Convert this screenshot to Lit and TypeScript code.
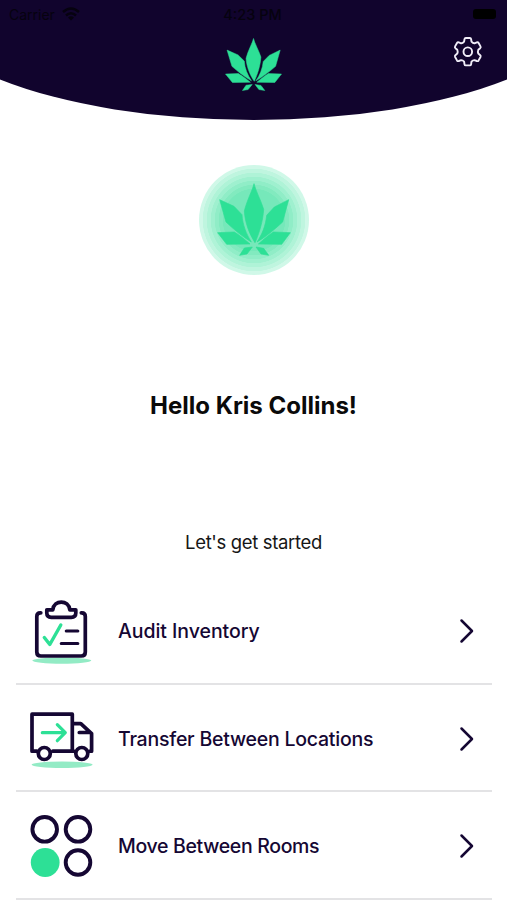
import { LitElement, html, svg, css } from "lit";
import { customElement } from "lit/decorators.js";

const leaf = html`<svg class="leaf" viewBox="81 85 222 219" preserveAspectRatio="none">
  <g fill="#2de096" stroke="#2de096" stroke-width="2" stroke-linejoin="round">
    <path d="M192 87 C197 108 212 135 221 164 C219 198 208 236 195 264 C178 238 165 204 163 169 C171 136 187 108 192 87Z"/>
    <path d="M89 135 L132 155 L156 180 C158 211 169 238 184 262 C157 246 130 223 108 202Z"/>
    <path d="M296 135 L253 157 L230 182 C227 213 216 240 201 262 C229 246 256 222 278 202Z"/>
    <path d="M83 234 L133 232 C150 242 166 256 180 268 L110 269Z"/>
    <path d="M301 234 L250 232 C234 242 219 256 205 268 L275 269Z"/>
    <path d="M187 277 L163 280 L149 302 L171 298Z"/>
    <path d="M198 277 L221 281 L236 302 L213 298Z"/>
  </g>
</svg>`;

const clipboard = svg`<g transform="translate(1.300 -4)">
  <ellipse cx="32.500" cy="70.600" rx="29.500" ry="3.100" fill="#93ebc5"/>
  <g fill="none" stroke="#150733" stroke-width="3.700" stroke-linecap="round" stroke-linejoin="round">
    <path d="M11.500 22.800H11Q7.500 22.800 7.500 26.500V62Q7.500 66 11.500 66H52Q56 66 56 62V26.500Q56 22.800 52.500 22.800H52"/>
    <path d="M17.500 19.800H23.500C24.500 9.500 39.500 9.500 40.500 19.800H46.500V23Q46.500 27.300 42 27.300H22Q17.500 27.300 17.500 23Z"/>
    <path d="M37 41H48.500M32 53.500H48.500" stroke-width="3.200"/>
  </g>
  <path d="M15 47.500L20.500 54.500L31.500 35" fill="none" stroke="#2de096" stroke-width="3.400" stroke-linecap="round" stroke-linejoin="round"/></g>`;

const truck = svg`<g transform="translate(.8 -2.300)">
  <ellipse cx="33.300" cy="65" rx="30.500" ry="3.200" fill="#93ebc5"/>
  <g fill="none" stroke="#150733" stroke-width="3.700" stroke-linejoin="round" stroke-linecap="round">
    <path d="M8 51.500H3.200V14.500H43.500V51.500M24 51.500H45M43.500 24H52L62.800 34V51.500H61M50.500 32.800H61"/>
    <circle cx="15.500" cy="53.800" r="6"/>
    <circle cx="53" cy="53.800" r="6"/>
  </g>
  <path d="M13.500 33H36M28.500 25L36.500 33L28.500 41" fill="none" stroke="#2de096" stroke-width="3.200" stroke-linecap="round" stroke-linejoin="round"/></g>`;

const rooms = svg`<g transform="translate(.5 0)">
  <g fill="none" stroke="#150733" stroke-width="3.900">
    <circle cx="16.200" cy="20.300" r="12.300"/>
    <circle cx="49.500" cy="20.300" r="12.300"/>
    <circle cx="49.500" cy="53.500" r="12.300"/>
  </g>
  <circle cx="16.700" cy="53.500" r="14.400" fill="#2de096"/></g>`;

const items = [
  { label: "Audit Inventory", cls: "audit", icon: clipboard },
  { label: "Transfer Between Locations", cls: "transfer", icon: truck },
  { label: "Move Between Rooms", cls: "move", icon: rooms },
];

@customElement("app-root")
export class AppRoot extends LitElement {
  static styles = css`
    :host { display: block; width: 507px; height: 900px; overflow: hidden; background: #fff;
      font-family: Inter, "Liberation Sans", sans-serif; color: #150733; }
    header { position: relative; height: 120px; display: flex; flex-direction: column; align-items: center; }
    .curve { position: absolute; inset: 0; width: 507px; height: 120px; }
    .status { position: relative; width: 100%; height: 28px; display: grid; grid-template-columns: 1fr auto 1fr;
      align-items: center; box-sizing: border-box; padding: 0 11px 0 9px; font-size: 14px; color: #06020f; }
    .carrier { display: flex; align-items: center; gap: 7px; }
    .wifi { width: 18px; height: 14px; }
    .time { font-weight: 500; font-size: 14.500px; }
    .battery { justify-self: end; width: 23px; height: 10px; border-radius: 3px; background: #000; }
    .leaf { display: block; }
    .logo { position: relative; margin-top: 10px; }
    .logo .leaf { width: 57px; height: 53px; }
    .gear { position: absolute; left: 452px; top: 36px; width: 31px; height: 31px; }
    .avatar { width: 110px; height: 110px; margin: 45px auto 0; border-radius: 50%; display: flex;
      justify-content: center; box-sizing: border-box; padding-top: 18px;
      background: radial-gradient(circle, #76e8ba 0 31px, #82eabf 31.500px 35px, #90edc7 35.500px 39px,
        #9ff0cf 39.500px 43px, #aff3d7 43.500px 47px, #bff5df 47.500px 51px, #d0f8e8 51.500px); }
    .avatar .leaf { width: 74px; height: 73px; }
    h1 { margin: 111px 0 0; height: 40px; line-height: 40px; text-align: center; font-size: 24px; font-weight: 700; color: #0a0a0a; }
    .intro { margin: 101px 0 0; height: 30px; line-height: 30px; text-align: center; font-size: 18.500px;
      letter-spacing: -.35px; color: #161616; }
    .list { margin: 20px 15px 0 16px; padding: 0; list-style: none; }
    .row { display: flex; align-items: center; height: 107.500px; box-sizing: border-box; padding-top: 3px; border-bottom: 2px solid #e3e3e5; }
    .icon { width: 66px; height: 74px; margin-left: 12px; flex: none; }
    .label { flex: 1; margin-left: 24px; font-size: 19.500px; font-weight: 500; white-space: nowrap; }
    .audit { letter-spacing: -.05px; }
    .transfer { letter-spacing: -.23px; }
    .move { letter-spacing: -.34px; }
    .chevron { width: 16px; height: 26px; margin-right: 17px; }
  `;

  render() {
    return html`
      <header>
        <svg class="curve" viewBox="0 0 507 120"><path d="M0 0H507V79.500A340 121.400 0 0 1 0 79.500Z" fill="#11042d"/></svg>
        <div class="status">
          <span class="carrier"><span>Carrier</span>
            <svg class="wifi" viewBox="0 0 18 14"><g fill="none" stroke="#06020f" stroke-width="2.500"><path d="M1 5Q9 -2 17 5M4 8.500Q9 4 14 8.500"/></g><path d="M6 10.500Q9 8 12 10.500L9 13.500Z" fill="#06020f"/></svg>
          </span>
          <span class="time">4:23 PM</span>
          <span class="battery"></span>
        </div>
        <div class="logo">${leaf}</div>
        <svg class="gear" viewBox="0 0 31 31" fill="none" stroke="#f1eef8" stroke-width="1.900" stroke-linejoin="round">
          <path d="M13.800 2H17.800Q18.900 2 19.100 3.100L19.500 5.700Q20.900 7.400 22.500 7.300L24.800 6.400Q26 6 26.600 7L28.500 10.400Q29 11.400 28.200 12.200L26.300 13.800Q25.500 15.700 26.300 17.600L28.200 19.200Q29 20 28.500 21L26.600 24.400Q26 25.400 24.800 25L22.500 24.100Q20.900 24 19.500 25.700L19.100 28.300Q18.900 29.400 17.800 29.400H13.800Q12.700 29.400 12.500 28.300L12.100 25.700Q10.700 24 9.100 24.100L6.800 25Q5.600 25.400 5 24.400L3.100 21Q2.600 20 3.400 19.200L5.300 17.600Q6.100 15.700 5.300 13.800L3.400 12.200Q2.600 11.400 3.100 10.400L5 7Q5.600 6 6.800 6.400L9.100 7.300Q10.700 7.400 12.100 5.700L12.500 3.100Q12.700 2 13.800 2Z"/>
          <circle cx="15.800" cy="15.700" r="4.300"/>
        </svg>
      </header>
      <div class="avatar">${leaf}</div>
      <h1><span class="hello">Hello Kris Collins!</span></h1>
      <p class="intro">Let's get started</p>
      <ul class="list">
        ${items.map((item) => html`<li class="row">
          <svg class="icon" viewBox="0 0 66 74">${item.icon}</svg>
          <span class="label ${item.cls}">${item.label}</span>
          <svg class="chevron" viewBox="0 0 16 26"><path d="M2.500 2.500L13 13L2.500 23.500" fill="none" stroke="#150733" stroke-width="2.500" stroke-linecap="round" stroke-linejoin="round"/></svg>
        </li>`)}
      </ul>`;
  }
}
